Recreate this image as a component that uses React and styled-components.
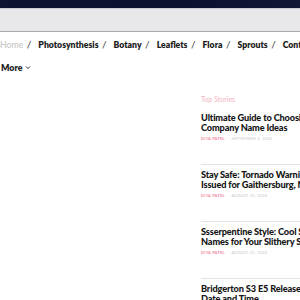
import React from "react";
import styled, { createGlobalStyle } from "styled-components";

const Global = createGlobalStyle`
  html, body { margin: 0; padding: 0; background: #fff; overflow: hidden; }
  body { font-family: Lato, "Noto Sans", sans-serif; width: 300px; height: 300px; }
`;

const Page = styled.div`
  width: 300px;
  height: 300px;
  overflow: hidden;
  display: flex;
  flex-direction: column;
  & > * { flex-shrink: 0; }
`;

const TopBand = styled.div`
  height: 8px;
  background: linear-gradient(90deg, #0d1233, #0b1030 60%, #111637);
  border-bottom: 1px solid #c9cbd6;
`;

const BrowserBar = styled.div`
  height: 22px;
  background: #e8e8ea;
  border-bottom: 1px solid #a9a9ad;
`;

const Nav = styled.nav`
  display: flex;
  align-items: center;
  white-space: nowrap;
  padding-top: 4px;
  height: 16px;
  font-size: 8.7px;
  font-weight: 800;
  color: #1b1b1b;
`;

const NavItem = styled.span`
  color: ${(p) => (p.$muted ? "#c9c9c9" : "#1b1b1b")};
  font-weight: ${(p) => (p.$muted ? 600 : 800)};
`;

const Sep = styled.span`
  margin: 0 7px 0 3.5px;
  color: #333;
  font-weight: 400;
  font-size: 10px;
`;

const MoreRow = styled.div`
  display: flex;
  align-items: center;
  gap: 3px;
  padding: 10px 0 0 1px;
  font-size: 8.8px;
  font-weight: 800;
  color: #1b1b1b;
`;

const Main = styled.div`
  display: grid;
  grid-template-columns: 200px 1fr;
  padding-top: 22px;
`;

const Side = styled.aside`
  display: flex;
  flex-direction: column;
  white-space: nowrap;
  overflow: hidden;
  padding-left: 1px;
`;

const SideHead = styled.div`
  font-size: 7px;
  color: #f2b8c4;
  font-weight: 500;
  margin-bottom: 10px;
`;

const Story = styled.article`
  display: flex;
  flex-direction: column;
  padding-top: ${(p) => (p.$first ? "0" : "5px")};
  border-top: ${(p) => (p.$first ? "none" : "1px solid #e2e2e2")};
  margin-top: ${(p) => (p.$first ? "0" : "23px")};
`;

const Title = styled.h3`
  margin: 0;
  font-size: 9.2px;
  line-height: 10px;
  font-weight: 900;
  letter-spacing: -0.15px;
  color: #141414;
`;

const Meta = styled.div`
  margin-top: 3px;
  font-size: 4px;
  letter-spacing: 0.2px;
  display: flex;
  gap: 4px;
  text-transform: uppercase;
`;

const Author = styled.span`
  color: #f08aa0;
  font-weight: 700;
`;

const DateText = styled.span`
  color: #c8c8c8;
`;

const stories = [
  ["Ultimate Guide to Choosing", "Company Name Ideas", "September 2, 2024"],
  ["Stay Safe: Tornado Warning", "Issued for Gaithersburg, MD", "August 31, 2024"],
  ["Ssserpentine Style: Cool Snake", "Names for Your Slithery Sidekick", "August 23, 2024"],
  ["Bridgerton S3 E5 Release", "Date and Time", "August 20, 2024"],
];

const navItems = ["Photosynthesis", "Botany", "Leaflets", "Flora", "Sprouts", "Contact"];

export default function App() {
  return (
    <Page>
      <Global />
      <TopBand />
      <BrowserBar />
      <Nav>
        <NavItem $muted>Home</NavItem>
        <Sep>/</Sep>
        {navItems.map((n, i) => (
          <React.Fragment key={n}>
            <NavItem>{n}</NavItem>
            {i < navItems.length - 1 && <Sep>/</Sep>}
          </React.Fragment>
        ))}
      </Nav>
      <MoreRow>
        More
        <svg width="6" height="5" viewBox="0 0 6 5">
          <path d="M1 1.5 L3 3.5 L5 1.5" fill="none" stroke="#333" strokeWidth="1" />
        </svg>
      </MoreRow>
      <Main>
        <div />
        <Side>
          <SideHead>Top Stories</SideHead>
          {stories.map((s, i) => (
            <Story key={i} $first={i === 0}>
              <Title>
                {s[0]}
                <br />
                {s[1]}
              </Title>
              <Meta>
                <Author>Diya Patel</Author>
                <DateText>- {s[2]}</DateText>
              </Meta>
            </Story>
          ))}
        </Side>
      </Main>
    </Page>
  );
}
